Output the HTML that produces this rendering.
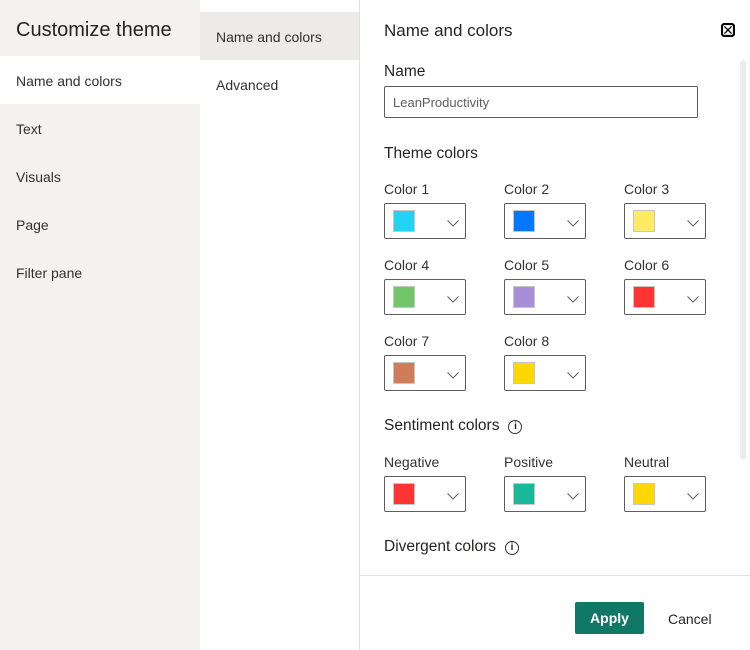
<!DOCTYPE html>
<html><head><style>
*{margin:0;padding:0;box-sizing:border-box}
body{width:750px;height:650px;overflow:hidden;font-family:"Segoe UI","Liberation Sans",sans-serif;color:#252423;background:#fff;position:relative}
.left{position:absolute;left:0;top:0;width:200px;height:650px;background:#f3f2f1}
.left h1{position:absolute;left:16px;top:19px;font-size:20px;font-weight:400;color:#252423}
.li{position:absolute;left:0;width:200px;height:48px;line-height:50px;padding-left:16px;font-size:14px;color:#323130}
.mid{position:absolute;left:200px;top:0;width:160px;height:650px;background:#fff;border-right:1px solid #e1dfdd}
.mi{position:absolute;left:0;width:159px;height:48px;line-height:50px;padding-left:16px;font-size:14px;color:#323130}
.abs{position:absolute}
.h2{font-size:17px;color:#252423}
.lbl{font-size:14px;color:#323130}
.h3{font-size:15.5px;color:#252423}
.dd{position:absolute;width:82px;height:36px;border:1px solid #605e5c;border-radius:2px}
.dd i{position:absolute;left:8px;top:6px;width:22px;height:22px;border:1px solid #c8c6c4}
.dd svg{position:absolute;left:61px;top:15px}
.info{display:inline-block;width:14px;height:14px;border:1.3px solid #323130;border-radius:50%;font-size:10px;line-height:11px;text-align:center;font-style:normal;vertical-align:1px;margin-left:9px;font-weight:bold}
</style></head><body>
<div class="left">
<h1>Customize theme</h1>
<div class="li" style="top:56px;background:#fff">Name and colors</div>
<div class="li" style="top:104px">Text</div>
<div class="li" style="top:152px">Visuals</div>
<div class="li" style="top:200px">Page</div>
<div class="li" style="top:248px">Filter pane</div>
</div>
<div class="mid">
<div class="mi" style="top:12px;background:#edebe9">Name and colors</div>
<div class="mi" style="top:60px">Advanced</div>
</div>
<div class="abs h2" style="left:384px;top:21px">Name and colors</div>
<svg class="abs" style="left:721px;top:23px" width="14" height="14" viewBox="0 0 14 14"><rect x="1" y="1" width="12" height="12" rx="2.5" fill="none" stroke="#000" stroke-width="2.2"/><path d="M3.5 3.5L10.5 10.5M10.5 3.5L3.5 10.5" stroke="#000" stroke-width="1.3"/></svg>
<div class="abs" style="left:740px;top:60px;width:6px;height:400px;background:#ececec;border-radius:3px"></div>
<div class="abs h3" style="left:384px;top:63px">Name</div>
<div class="abs" style="left:384px;top:86px;width:314px;height:32px;border:1px solid #605e5c;border-radius:2px;font-size:13px;color:#605e5c;padding:8px 0 0 8px">LeanProductivity</div>
<div class="abs h3" style="left:384px;top:145px">Theme colors</div>

<div class="abs lbl" style="left:384px;top:181px">Color 1</div>
<div class="abs lbl" style="left:504px;top:181px">Color 2</div>
<div class="abs lbl" style="left:624px;top:181px">Color 3</div>
<div class="dd" style="left:384px;top:203px"><i style="background:#22d3f5"></i><svg width="14" height="8"><path d="M1.5 1.5L7 7L12.5 1.5" fill="none" stroke="#605e5c"/></svg></div>
<div class="dd" style="left:504px;top:203px"><i style="background:#0078ff"></i><svg width="14" height="8"><path d="M1.5 1.5L7 7L12.5 1.5" fill="none" stroke="#605e5c"/></svg></div>
<div class="dd" style="left:624px;top:203px"><i style="background:#ffea63"></i><svg width="14" height="8"><path d="M1.5 1.5L7 7L12.5 1.5" fill="none" stroke="#605e5c"/></svg></div>

<div class="abs lbl" style="left:384px;top:257px">Color 4</div>
<div class="abs lbl" style="left:504px;top:257px">Color 5</div>
<div class="abs lbl" style="left:624px;top:257px">Color 6</div>
<div class="dd" style="left:384px;top:279px"><i style="background:#71c66a"></i><svg width="14" height="8"><path d="M1.5 1.5L7 7L12.5 1.5" fill="none" stroke="#605e5c"/></svg></div>
<div class="dd" style="left:504px;top:279px"><i style="background:#a78fd8"></i><svg width="14" height="8"><path d="M1.5 1.5L7 7L12.5 1.5" fill="none" stroke="#605e5c"/></svg></div>
<div class="dd" style="left:624px;top:279px"><i style="background:#ff3535"></i><svg width="14" height="8"><path d="M1.5 1.5L7 7L12.5 1.5" fill="none" stroke="#605e5c"/></svg></div>

<div class="abs lbl" style="left:384px;top:333px">Color 7</div>
<div class="abs lbl" style="left:504px;top:333px">Color 8</div>
<div class="dd" style="left:384px;top:355px"><i style="background:#cf7c5a"></i><svg width="14" height="8"><path d="M1.5 1.5L7 7L12.5 1.5" fill="none" stroke="#605e5c"/></svg></div>
<div class="dd" style="left:504px;top:355px"><i style="background:#ffd700"></i><svg width="14" height="8"><path d="M1.5 1.5L7 7L12.5 1.5" fill="none" stroke="#605e5c"/></svg></div>

<div class="abs h3" style="left:384px;top:417px">Sentiment colors<i class="info">i</i></div>
<div class="abs lbl" style="left:384px;top:454px">Negative</div>
<div class="abs lbl" style="left:504px;top:454px">Positive</div>
<div class="abs lbl" style="left:624px;top:454px">Neutral</div>
<div class="dd" style="left:384px;top:476px"><i style="background:#ff3535"></i><svg width="14" height="8"><path d="M1.5 1.5L7 7L12.5 1.5" fill="none" stroke="#605e5c"/></svg></div>
<div class="dd" style="left:504px;top:476px"><i style="background:#19b898"></i><svg width="14" height="8"><path d="M1.5 1.5L7 7L12.5 1.5" fill="none" stroke="#605e5c"/></svg></div>
<div class="dd" style="left:624px;top:476px"><i style="background:#ffd700"></i><svg width="14" height="8"><path d="M1.5 1.5L7 7L12.5 1.5" fill="none" stroke="#605e5c"/></svg></div>
<div class="abs h3" style="left:384px;top:538px">Divergent colors<i class="info">i</i></div>

<div class="abs" style="left:360px;top:575px;width:390px;height:1px;background:#e1dfdd"></div>
<div class="abs" style="left:575px;top:602px;width:69px;height:32px;background:#117865;border-radius:2px;color:#fff;font-size:14px;font-weight:bold;text-align:center;line-height:33px">Apply</div>
<div class="abs" style="left:668px;top:611px;font-size:14px;color:#252423">Cancel</div>
</body></html>
